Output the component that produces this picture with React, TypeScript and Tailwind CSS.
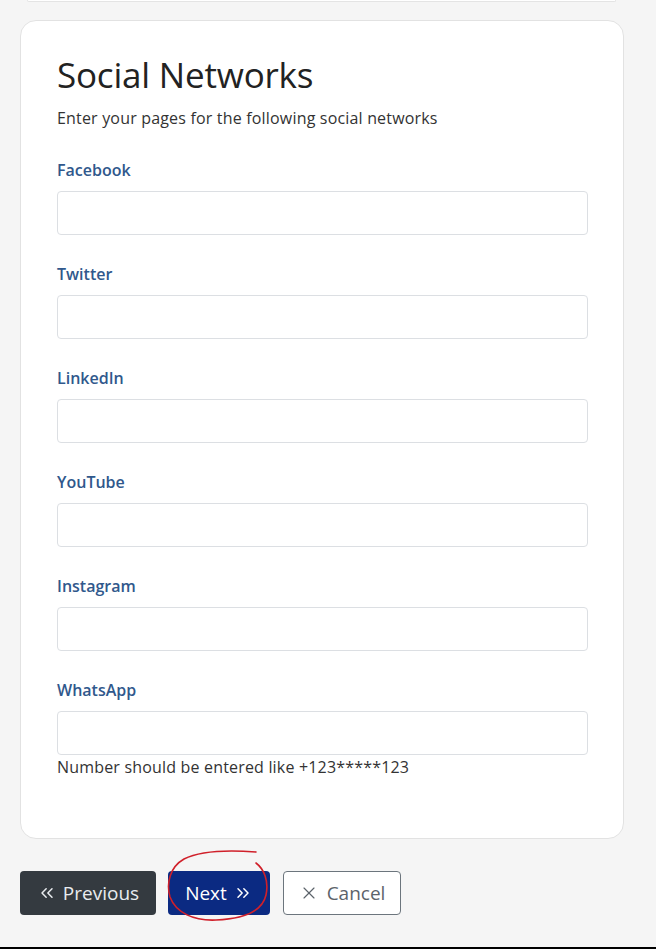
import React from "react";
import { ChevronsLeft, ChevronsRight, X } from "lucide-react";

const fields = ["Facebook", "Twitter", "LinkedIn", "YouTube", "Instagram", "WhatsApp"];

export default function App() {
  return (
    <div className="min-h-[949px] bg-[#f5f5f5] font-['Open_Sans',sans-serif] flex flex-col">
      {/* bottom of the previous card, scrolled off */}
      <div className="mx-[27px] w-[589px] h-[2px] bg-white border-b border-x border-[#e4e4e4] rounded-b-md" />

      <div className="mx-5 mt-[18px] w-[604px] bg-white border border-[#e2e2e2] rounded-2xl pl-9 pr-[35px] pt-[34px] pb-[60px]">
        <h2 className="text-[35px] leading-10 text-[#222] font-normal tracking-[-0.2px]">Social Networks</h2>
        <p className="mt-3 text-[16px] leading-[22px] text-[#333] tracking-[0.18px]">
          Enter your pages for the following social networks
        </p>

        <div className="mt-[30px]">
          {fields.map((name, i) => (
            <div key={name} className={i < fields.length - 1 ? "mb-[28px]" : ""}>
              <label className="block text-[16px] leading-[22px] font-semibold text-[#30588c]">{name}</label>
              <input
                type="text"
                className="mt-[10px] block w-full h-11 rounded border border-[#dcdfe3] bg-white px-3 outline-none"
              />
            </div>
          ))}
          <div className="text-[16px] leading-[22px] text-[#333] mt-px tracking-[0.18px]">
            Number should be entered like +123*****123
          </div>
        </div>
      </div>

      <div className="relative flex items-center gap-3 px-5 pt-[32px] pb-[32px]">
        <button className="h-11 w-[136px] rounded bg-[#343a40] text-[#e9ecef] text-[19px] flex items-center justify-center gap-1.5">
          <ChevronsLeft size={20} strokeWidth={1.8} />
          Previous
        </button>
        <button className="h-11 w-[102px] rounded bg-[#0b2a82] text-white text-[19px] flex items-center justify-center gap-1.5">
          Next
          <ChevronsRight size={20} strokeWidth={1.8} />
        </button>
        <button className="h-11 w-[118px] ml-px rounded border border-[#6c757d] bg-white text-[#5c636a] text-[19px] flex items-center justify-center gap-2">
          <X size={20} strokeWidth={1.4} />
          Cancel
        </button>

        {/* red hand-drawn annotation */}
        <svg
          className="absolute left-[160px] top-[8px] pointer-events-none"
          width="120"
          height="80"
          viewBox="0 0 120 80"
          fill="none"
        >
          <path
            d="M96 5 C70 3 40 4 24 12 C10 20 6 36 10 50 C16 66 34 74 56 73 C80 72 102 66 106 48 C109 34 104 22 96 16"
            stroke="#d0202a"
            strokeWidth="1.6"
            strokeLinecap="round"
          />
        </svg>
      </div>

      <div className="h-[2px] bg-black" />
    </div>
  );
}
